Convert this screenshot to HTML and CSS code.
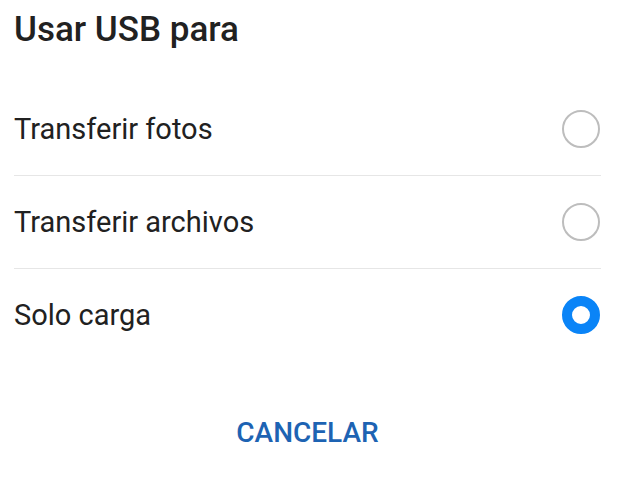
FILE: index.html
```html
<!DOCTYPE html>
<html lang="es">
<head>
    <meta charset="UTF-8">
    <meta name="viewport" content="width=device-width, initial-scale=1.0">
    <title>Usar USB para</title>
    <link rel="stylesheet" href="styles.css">
</head>
<body>

    <div class="dialogo">
        <h1 class="titulo">Usar USB para</h1>

        <ul class="opciones">
            <li class="opcion">
                <span>Transferir fotos</span>
                <span class="radio"></span>
            </li>
            <li class="opcion">
                <span>Transferir archivos</span>
                <span class="radio"></span>
            </li>
            <li class="opcion">
                <span>Solo carga</span>
                <span class="radio marcado"></span>
            </li>
        </ul>

        <div class="acciones">
            <button type="button" class="boton">CANCELAR</button>
        </div>
    </div>

</body>
</html>
```

FILE: styles.css
```css
body {
    margin: 0;
    background-color: #fff;
    font-family: Roboto, "Liberation Sans", sans-serif;
    color: #212121;
}
.dialogo {
    padding: 10px 34px 0 14px;
}
.titulo {
    margin: 0 0 33px 0;
    font-size: 35px;
    font-weight: 500;
    line-height: 40px;
}
.opciones {
    list-style: none;
    margin: 0;
    padding: 0;
}
.opcion {
    display: flex;
    align-items: center;
    justify-content: space-between;
    height: 92px;
    font-size: 29px;
    border-bottom: 1px solid #e6e6e6;
}
.opcion:last-child {
    border-bottom: none;
}
/* circulo del radio */
.radio {
    width: 34px;
    height: 34px;
    border: 2px solid #bdbdbd;
    border-radius: 50%;
    margin-right: 1px;
}
.radio.marcado {
    width: 18px;
    height: 18px;
    border: 10px solid #0a84f7;
}
.acciones {
    display: flex;
    justify-content: center;
    margin-top: 41px;
}
.boton {
    height: 60px;
    padding: 0 16px;
    border: none;
    background: none;
    font-family: Roboto, "Liberation Sans", sans-serif;
    font-size: 28px;
    font-weight: 500;
    color: #1d63b3;
}
```
